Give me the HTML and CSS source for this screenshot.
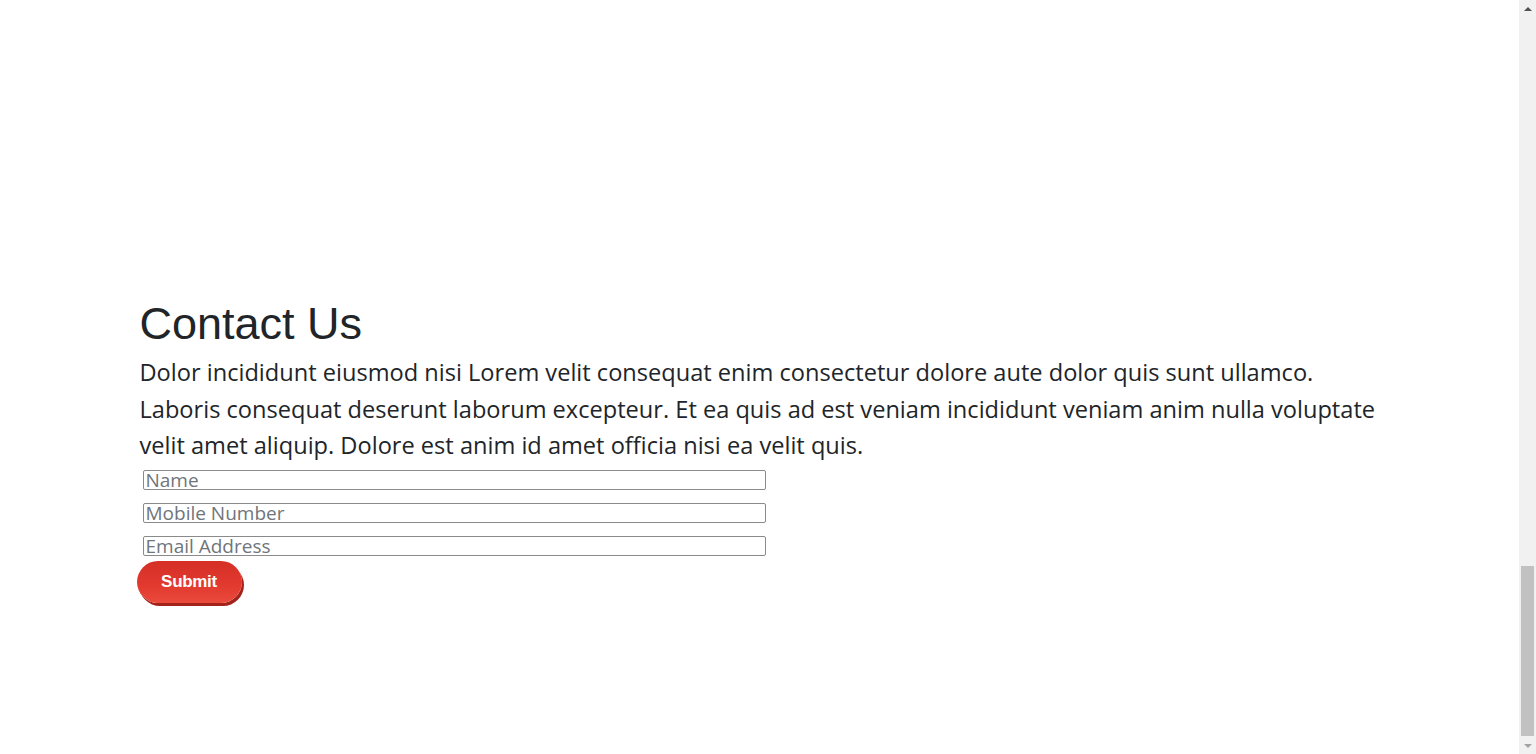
FILE: index.html
```html
<!DOCTYPE html>
<html lang="en">
<head>
<meta charset="utf-8">
<title>Contact Us</title>
<link rel="stylesheet" href="styles.css">
</head>
<body>
<div class="page">
  <main class="main">
    <section class="spacer"></section>
    <section class="contact">
      <h1 class="title">Contact Us</h1>
      <p class="lead">Dolor incididunt eiusmod nisi Lorem velit consequat enim consectetur dolore aute dolor quis sunt ullamco. Laboris consequat deserunt laborum excepteur. Et ea quis ad est veniam incididunt veniam anim nulla voluptate velit amet aliquip. Dolore est anim id amet officia nisi ea velit quis.</p>
      <form class="form">
        <input class="field" type="text" placeholder="Name">
        <input class="field" type="text" placeholder="Mobile Number">
        <input class="field" type="text" placeholder="Email Address">
        <button class="submit" type="button">Submit</button>
      </form>
    </section>
  </main>
  <div class="scrollbar">
    <div class="arrow arrow-up"></div>
    <div class="track"><div class="thumb"></div></div>
    <div class="arrow arrow-down"></div>
  </div>
</div>
</body>
</html>
```
FILE: styles.css
```css
html, body {
  margin: 0;
  padding: 0;
  height: 100%;
  overflow: hidden;
  background: #fff;
}
.page {
  display: flex;
  height: 754px;
}
.main {
  flex: 1;
  display: flex;
  flex-direction: column;
}
.spacer {
  height: 297px;
  flex: none;
}
.contact {
  width: 1240px;
  margin: 0 auto;
  color: #212529;
}
.title {
  margin: 0;
  font-family: "Liberation Sans", Arial, sans-serif;
  font-weight: 400;
  font-size: 45px;
  line-height: 53px;
}
.lead {
  margin: 4px -14px 6px 0;
  font-family: "Open Sans", "Noto Sans", sans-serif;
  font-size: 23.6px;
  line-height: 36.5px;
}
.form {
  display: flex;
  flex-direction: column;
  align-items: flex-start;
}
.field {
  box-sizing: border-box;
  width: 623px;
  height: 20px;
  margin: 0 0 13px 3px;
  padding: 0 2px;
  border: 1px solid #8a8a8a;
  border-radius: 2px;
  font-family: "Open Sans", "Noto Sans", sans-serif;
  font-size: 19px;
  color: #212529;
  background: #fff;
}
.field:last-of-type {
  margin-bottom: 5px;
}
.field::placeholder {
  color: #6f757b;
}
.submit {
  width: 105px;
  height: 42px;
  margin: 0 0 0 -3px;
  border: none;
  border-radius: 21px;
  background: linear-gradient(180deg, #d52f26 0%, #e23a2f 60%, #ea4a3c 100%);
  box-shadow: 2px 3px 0 #a3231b;
  color: #fff;
  font-family: "Liberation Sans", Arial, sans-serif;
  font-weight: 700;
  font-size: 17px;
  letter-spacing: -0.3px;
}
.scrollbar {
  width: 17px;
  flex: none;
  background: #f1f1f1;
  display: flex;
  flex-direction: column;
}
.arrow {
  height: 17px;
  flex: none;
  display: flex;
  align-items: center;
  justify-content: center;
}
.arrow-up::before {
  content: "";
  border-left: 4px solid transparent;
  border-right: 4px solid transparent;
  border-bottom: 4px solid #505050;
}
.arrow-down::before {
  content: "";
  border-left: 4px solid transparent;
  border-right: 4px solid transparent;
  border-top: 4px solid #a3a3a3;
}
.track {
  flex: 1;
  display: flex;
  flex-direction: column;
  justify-content: flex-end;
  padding: 0 2px 0 2px;
}
.thumb {
  height: 170px;
  margin-bottom: 1px;
  background: #c1c1c1;
}
```
